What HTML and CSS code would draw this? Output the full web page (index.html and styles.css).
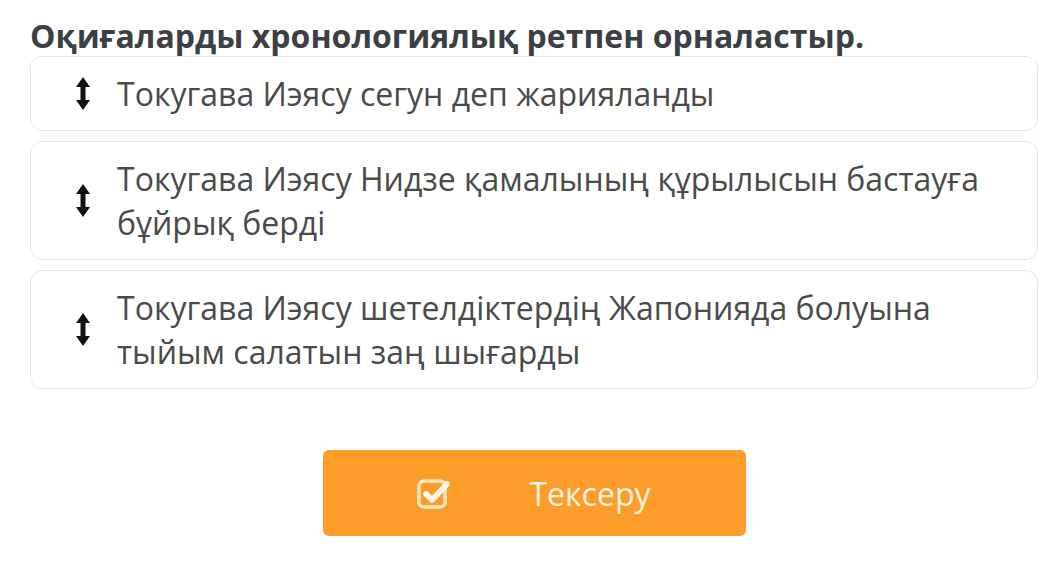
FILE: index.html
```html
<!DOCTYPE html>
<html lang="kk">

<head>
    <meta charset="UTF-8">
    <meta name="viewport" content="width=device-width, initial-scale=1.0">
    <title>Тапсырма</title>
    <link rel="stylesheet" href="styles.css">
</head>

<body>
    <div class="container">
        <h1 class="question">Оқиғаларды хронологиялық ретпен орналастыр.</h1>
        <div class="items">
            <div class="item">
                <span class="handle">
                    <svg width="14" height="33" viewBox="0 0 14 33">
                        <path d="M7 0 L14 10 L9.5 10 L9.5 23 L14 23 L7 33 L0 23 L4.5 23 L4.5 10 L0 10 Z" fill="#111" />
                    </svg>
                </span>
                <span class="item-text">Токугава Иэясу сегун деп жарияланды</span>
            </div>
            <div class="item">
                <span class="handle">
                    <svg width="14" height="33" viewBox="0 0 14 33">
                        <path d="M7 0 L14 10 L9.5 10 L9.5 23 L14 23 L7 33 L0 23 L4.5 23 L4.5 10 L0 10 Z" fill="#111" />
                    </svg>
                </span>
                <span class="item-text">Токугава Иэясу Нидзе қамалының құрылысын бастауға бұйрық берді</span>
            </div>
            <div class="item">
                <span class="handle">
                    <svg width="14" height="33" viewBox="0 0 14 33">
                        <path d="M7 0 L14 10 L9.5 10 L9.5 23 L14 23 L7 33 L0 23 L4.5 23 L4.5 10 L0 10 Z" fill="#111" />
                    </svg>
                </span>
                <span class="item-text">Токугава Иэясу шетелдіктердің Жапонияда болуына тыйым салатын заң шығарды</span>
            </div>
        </div>
        <div class="actions">
            <button class="check-btn">
                <svg width="34" height="34" viewBox="0 0 34 34">
                    <rect x="2" y="5" width="26" height="26" rx="5" fill="none" stroke="#fbe6c2" stroke-width="3.5" />
                    <path d="M9 18 L15 24 L30 8" fill="none" stroke="#fff8ec" stroke-width="5.5" stroke-linecap="round" stroke-linejoin="round" />
                </svg>
                <span>Тексеру</span>
            </button>
        </div>
    </div>
</body>

</html>
```

FILE: styles.css
```css
body {
    margin: 0;
    font-family: "Open Sans", "Noto Sans", sans-serif;
    background-color: #ffffff;
}

.container {
    padding: 16px 14px 0 30px;
}

.question {
    margin: 0;
    font-size: 32px;
    line-height: 40px;
    font-weight: 700;
    color: #3c3f44;
}

.items {
    display: flex;
    flex-direction: column;
    gap: 10px;
}

.item {
    display: flex;
    align-items: center;
    border: 1px solid #e6e6e6;
    border-radius: 12px;
    padding: 14.5px 20px 14.5px 0;
}

.handle {
    flex: 0 0 86px;
    display: flex;
    justify-content: center;
    padding-left: 17px;
    box-sizing: border-box;
    width: 86px;
}

.item-text {
    font-size: 32px;
    line-height: 44px;
    color: #4a4a4a;
}

.actions {
    display: flex;
    justify-content: center;
    margin-top: 61px;
}

.check-btn {
    display: flex;
    align-items: center;
    justify-content: center;
    gap: 78px;
    width: 423px;
    height: 86px;
    border: none;
    border-radius: 6px;
    background-color: #fc9d2b;
    color: #fff3dc;
    font-family: "Open Sans", "Noto Sans", sans-serif;
    font-size: 32px;
}
```
